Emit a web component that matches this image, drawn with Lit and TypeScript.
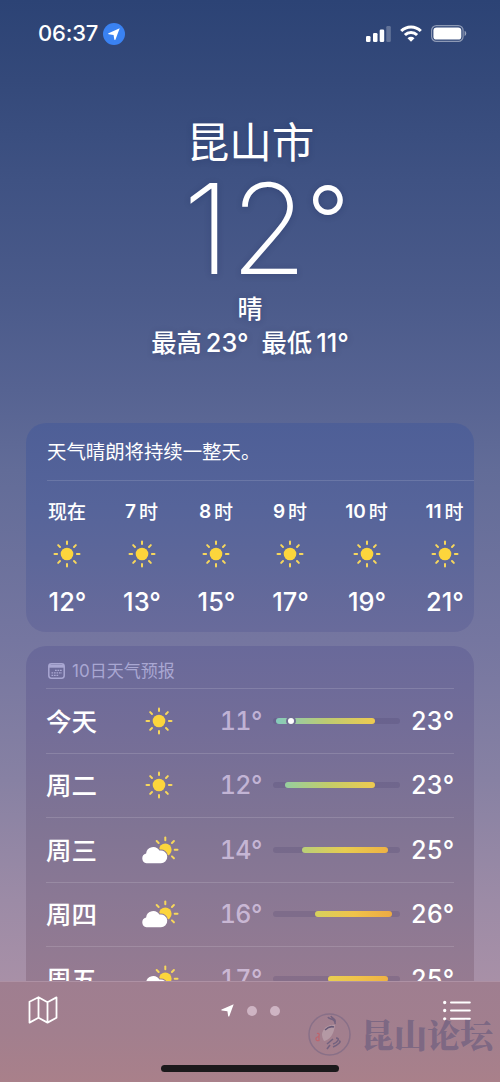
import { LitElement, html, css, svg } from "lit";
import { customElement, property } from "lit/decorators.js";

type Sky = "sun" | "partly";

const RAYS = [0, 45, 90, 135, 180, 225, 270, 315];

@customElement("sky-icon")
class SkyIcon extends LitElement {
  @property() kind: Sky = "sun";

  static styles = css`
    :host { display: block; line-height: 0; }
    .sun { width: 28px; height: 28px; }
    .partly { width: 38px; height: 28px; overflow: visible; }
    .disc { fill: #fcd53c; }
    .ray { stroke: #f7d75c; stroke-width: 2; stroke-linecap: round; }
    .cloud { fill: #fff; }
  `;

  render() {
    if (this.kind === "partly") {
      return html`<svg class="partly" viewBox="0 0 38 28">
        <mask id="m" maskUnits="userSpaceOnUse" x="-2" y="-2" width="44" height="34">
          <rect x="-2" y="-2" width="44" height="34" fill="#fff" />
          <path d="M6.500 27.200a5 5 0 0 1-.4-9.800A7.200 7.200 0 0 1 19.400 14.600a6.400 6.400 0 1 1 .8 12.600z" fill="#000" stroke="#000" stroke-width="2" />
        </mask>
        <g mask="url(#m)">
          <circle class="disc" cx="25.300" cy="13.700" r="6.300" />
          ${[-90, -45, 0, 45, -135].map(
            (a) => svg`<line class="ray" x1="34.700" x2="37.500" y1="13.700" y2="13.700" transform="rotate(${a} 25.300 13.700)" />`
          )}
        </g>
        <path class="cloud" d="M6.500 27.200a5 5 0 0 1-.4-9.800A7.200 7.200 0 0 1 19.400 14.600a6.400 6.400 0 1 1 .8 12.600z" />
      </svg>`;
    }
    return html`<svg class="sun" viewBox="0 0 28 28">
      <circle class="disc" cx="14" cy="14" r="6.300" />
      ${RAYS.map(
        (a) => svg`<line class="ray" x1="23.900" x2="26.500" y1="14" y2="14" transform="rotate(${a} 14 14)" />`
      )}
    </svg>`;
  }
}

const HOURS = [
  { n: "", label: "现在", temp: "12°" },
  { n: "7", label: "时", temp: "13°" },
  { n: "8", label: "时", temp: "15°" },
  { n: "9", label: "时", temp: "17°" },
  { n: "10", label: "时", temp: "19°" },
  { n: "11", label: "时", temp: "21°" },
];

const DAYS: { day: string; sky: Sky; lo: number; hi: number; start: number; end: number; from: string; mid: string; to: string; now?: number }[] = [
  { day: "今天", sky: "sun", lo: 11, hi: 23, start: 3, end: 102, from: "#85cbbd", mid: "#bccb73", to: "#eeca50", now: 18 },
  { day: "周二", sky: "sun", lo: 12, hi: 23, start: 12, end: 102, from: "#96ce9f", mid: "#c4cc68", to: "#eeca50" },
  { day: "周三", sky: "partly", lo: 14, hi: 25, start: 29, end: 115, from: "#b9cf79", mid: "#e7cc50", to: "#eeb244" },
  { day: "周四", sky: "partly", lo: 16, hi: 26, start: 42, end: 119, from: "#d6d15c", mid: "#f0c34a", to: "#edaa43" },
  { day: "周五", sky: "partly", lo: 17, hi: 25, start: 55, end: 115, from: "#e8cf52", mid: "#f0c24a", to: "#eeb244" },
];

@customElement("app-root")
class AppRoot extends LitElement {
  static styles = css`
    :host {
      display: flex;
      flex-direction: column;
      position: relative;
      width: 500px;
      height: 1082px;
      overflow: hidden;
      color: #fff;
      font-family: Inter, "Noto Sans CJK SC", sans-serif;
      background: linear-gradient(#2c4375 0, #34497a 80px, #3f5283 180px, #4a5a8a 290px, #566392 390px, #626c98 470px, #7576a0 640px, #8781a3 780px, #9c8ba6 900px, #a890a7 982px);
    }
    * { box-sizing: border-box; }
    svg { display: block; }
    .status {
      flex: none;
      height: 67px;
      padding: 0 33px 0 38px;
      display: flex;
      align-items: center;
    }
    .time { font-size: 22px; font-weight: 550; line-height: 67px; letter-spacing: -0.2px; width: 65px; white-space: nowrap; }
    .signals { margin-left: auto; display: flex; align-items: center; gap: 9px; }
    .hero {
      flex: none;
      height: 356px;
      display: flex;
      flex-direction: column;
      align-items: center;
      text-shadow: 0 1px 6px rgba(20, 30, 80, 0.25);
      white-space: nowrap;
    }
    .city { margin-top: 46px; height: 58px; line-height: 59px; font-size: 42.500px; font-weight: 400; padding-left: 1px; }
    .big { height: 118px; display: flex; line-height: 115px; font-size: 125px; font-weight: 250; padding-left: 32px; }
    .deg { font-size: 94px; line-height: 98px; font-weight: 340; margin-left: -1px; }
    .cond { height: 37px; line-height: 41px; font-size: 25px; font-weight: 500; }
    .range { height: 34px; line-height: 34px; font-size: 25.300px; font-weight: 500; display: flex; gap: 4px; }
    .range .low { margin-left: 9px; }
    .card { flex: none; margin: 0 26px; border-radius: 20px; }
    .hourly {
      height: 209px;
      overflow: hidden;
      background: linear-gradient(#4e5f97, #56649a 40%, #5d679a 65%, #696b9b);
    }
    .summary {
      height: 58px;
      margin-left: 21px;
      line-height: 58px;
      font-size: 19.400px;
      border-bottom: 1px solid rgba(255, 255, 255, 0.13);
      white-space: nowrap;
    }
    .hours { display: grid; grid-template-columns: 82px 67px 82px 66px 87px 69px; }
    .hour { display: flex; flex-direction: column; align-items: center; white-space: nowrap; }
    .hour-label { display: flex; gap: 3px; height: 28px; line-height: 28px; margin-top: 17px; font-size: 19px; font-weight: 600; }
    .hour-label .cjk { line-height: 30px; font-weight: 500; }
    .hour-icon { margin-top: 14px; }
    .hour-temp { margin-top: 16px; height: 36px; line-height: 36px; font-size: 25.400px; font-weight: 480; padding-left: 1px; }
    .daily {
      margin-top: 14px;
      height: 440px;
      padding: 0 20px 0 20px;
      border-radius: 20px 20px 0 0;
      background: linear-gradient(#69699a 0, #736d98 80px, #807494 180px, #8a7894 250px, #967b91 336px);
    }
    .daily-title { display: flex; align-items: center; height: 42px; padding: 8px 0 0 2px; gap: 7px; font-size: 17px; color: #a9a7d2; white-space: nowrap; }
    .daily-title span { line-height: 26px; }
    .day {
      height: 64.500px;
      display: grid;
      grid-template-columns: 94px 38px 84px 11px 127px 1fr;
      align-items: center;
      border-top: 1px solid rgba(255, 255, 255, 0.14);
      font-size: 25px;
      font-weight: 480;
      font-variant-numeric: tabular-nums;
      line-height: 36px;
      white-space: nowrap;
    }
    .name { font-size: 25.500px; line-height: 36px; padding-top: 2px; }
    .icon { display: flex; justify-content: center; }
    .lo { text-align: right; color: rgba(232, 216, 246, 0.66); letter-spacing: -0.5px; }
    .track { grid-column: 5; height: 6px; border-radius: 3px; background: rgba(70, 60, 105, 0.2); position: relative; }
    .bar { height: 6px; border-radius: 3px; }
    .now {
      position: absolute;
      top: -2px;
      width: 10px;
      height: 10px;
      border-radius: 50%;
      border: 2px solid #706d93;
      background: #fff;
    }
    .hi { text-align: right; letter-spacing: -0.2px; }
    .toolbar {
      position: absolute;
      left: 0;
      right: 0;
      bottom: 0;
      height: 101px;
      padding: 14px 29px 0 28px;
      display: flex;
      justify-content: space-between;
      align-items: flex-start;
      border-top: 1px solid #ae91a4;
      background: linear-gradient(#9f7e90, #a27f8e 50%, #a9808a);
    }
    .pages { display: flex; align-items: center; gap: 13px; height: 29px; margin-left: -1px; }
    .dot { width: 10px; height: 10px; border-radius: 50%; background: #ceb4c3; }
    .list { margin-top: 3px; }
    .home { position: absolute; left: 161px; bottom: 10px; width: 178px; height: 7px; border-radius: 4px; background: #1b191b; }
    .mark { position: absolute; left: 308px; bottom: 24px; display: flex; align-items: center; gap: 10px; color: rgba(101, 89, 125, 0.62); }
    .mark-text { font-family: "Noto Serif CJK SC", "Noto Sans CJK SC", sans-serif; font-size: 33px; line-height: 48px; font-weight: 900; white-space: nowrap; }
  `;

  render() {
    return html`
      <div class="status">
        <span class="time">06:37</span>
        <svg width="22" height="22" viewBox="0 0 22 22">
          <circle cx="11" cy="11" r="11" fill="#3a82f2" />
          <path d="M16.700 5.300 12.400 16.700a.6.600 0 0 1-1.100-.1l-.7-4.600-5-.7a.6.600 0 0 1-.1-1.100z" fill="#fff" />
        </svg>
        <div class="signals">
          <svg width="25" height="16" viewBox="0 0 25 16" fill="#fff">
            <rect x="0" y="10" width="4.500" height="6" rx="1.300" />
            <rect x="7" y="7" width="4.500" height="9" rx="1.300" />
            <rect x="13.700" y="3.500" width="4.500" height="12.500" rx="1.300" />
            <rect x="20.300" y="0" width="4.500" height="16" rx="1.300" opacity=".25" />
          </svg>
          <svg width="22" height="17" viewBox="0 0 22 17" fill="none" stroke="#fff" stroke-width="3">
            <path d="M1.200 6a13.800 13.800 0 0 1 19.600 0" />
            <path d="M4.900 10a8.600 8.600 0 0 1 12.200 0" />
            <path d="M11 16.800 7.500 13.200a4.900 4.900 0 0 1 7 0z" fill="#fff" stroke="none" />
          </svg>
          <svg width="36" height="17" viewBox="0 0 36 17">
            <rect x=".6" y=".6" width="31.500" height="15.800" rx="4.800" fill="none" stroke="#fff" stroke-opacity=".45" stroke-width="1.200" />
            <rect x="2.400" y="2.400" width="27.900" height="12.200" rx="3.200" fill="#fff" />
            <path d="M33.600 5.800v5.400a3 3 0 0 0 0-5.400" fill="#fff" opacity=".5" />
          </svg>
        </div>
      </div>

      <div class="hero">
        <div class="city">昆山市</div>
        <div class="big"><span>12</span><span class="deg">°</span></div>
        <div class="cond">晴</div>
        <div class="range"><span>最高</span><span>23°</span><span class="low">最低</span><span>11°</span></div>
      </div>

      <div class="card hourly">
        <div class="summary">天气晴朗将持续一整天。</div>
        <div class="hours">
          ${HOURS.map(
            (h) => html`<div class="hour">
              <div class="hour-label">${h.n ? html`<span>${h.n}</span>` : ""}<span class="cjk">${h.label}</span></div>
              <sky-icon class="hour-icon" kind="sun"></sky-icon>
              <div class="hour-temp">${h.temp}</div>
            </div>`
          )}
        </div>
      </div>

      <div class="card daily">
        <div class="daily-title">
          <svg width="17" height="16" viewBox="0 0 17 16" fill="none" stroke="#a9a7d2">
            <rect x=".8" y=".8" width="15.400" height="14.400" rx="2.600" stroke-width="1.500" />
            <path d="M1 3.200h15" stroke-width="3" />
            <path d="M7 7.400h7M3.500 9.900H14M3.500 12.400H11" stroke-width="1.400" stroke-dasharray="1.700 .8" />
          </svg>
          <span>10日天气预报</span>
        </div>
        ${DAYS.map(
          (d) => html`<div class="day">
            <span class="name">${d.day}</span>
            <span class="icon"><sky-icon kind=${d.sky}></sky-icon></span>
            <span class="lo">${d.lo}°</span>
            <div class="track">
              <div class="bar" style="margin-left:${d.start}px;width:${d.end - d.start}px;background:linear-gradient(90deg,${d.from},${d.mid},${d.to})"></div>
              ${d.now !== undefined ? html`<div class="now" style="left:${d.now - 5}px"></div>` : ""}
            </div>
            <span class="hi">${d.hi}°</span>
          </div>`
        )}
      </div>

      <div class="toolbar">
        <svg width="30" height="28" viewBox="0 0 30 28" fill="none" stroke="#fff" stroke-width="1.800" stroke-linejoin="round">
          <path d="M1.500 5.800 10.500 1.200l9 5 9-4.800v20.300l-9 4.900-9-4.900-9 4.900zM10.500 1.200v20.500M19.500 6.200v20.400" />
        </svg>
        <div class="pages">
          <svg width="13" height="13" viewBox="0 0 13 13"><path d="M12.700.3 8.300 12.300a.6.600 0 0 1-1.100-.1l-.8-4.900-5.700-.8a.6.600 0 0 1-.1-1.100z" fill="#fff" /></svg>
          <span class="dot"></span><span class="dot"></span>
        </div>
        <svg class="list" width="28" height="24" viewBox="0 0 28 24" stroke="#fff" stroke-linecap="round">
          <path d="M8 3.500h18.800M8 11.500h18.800M8 19.800h18.800" stroke-width="2" />
          <path d="M1.700 3.500h.01M1.700 11.500h.01M1.700 19.800h.01" stroke-width="3.300" />
        </svg>
      </div>
      <div class="mark">
        <svg width="43" height="43" viewBox="0 0 43 43" fill="none">
          <circle cx="21.500" cy="21.500" r="20.500" stroke="#806b86" stroke-width="1.500" opacity=".75" />
          <path d="M27 12C21 11 15 15 14 21c0 3 1 5 2 7 5-1 10-6 11-16z" fill="#b9a0aa" opacity=".8" />
          <path d="M17 17c3-3 6-4 9-3" stroke="#665775" stroke-width="1.500" />
          <path d="M20 4c1 3 8 1 7 7M23 3c1 3 5 2 4 6M28 25c5 0 1 5-3 6M31 28c3 0-1 4-6 6M25 26l-6 5M22 32l-3 4" stroke="#74627f" stroke-width="1.600" />
          <path d="M9 20.500c3-1 3 3 .5 3.500s-2 4.500 1.500 3.500v-6.500" stroke="#bd646d" stroke-width="1.200" />
        </svg>
        <span class="mark-text">昆山论坛</span>
      </div>
      <div class="home"></div>
    `;
  }
}
